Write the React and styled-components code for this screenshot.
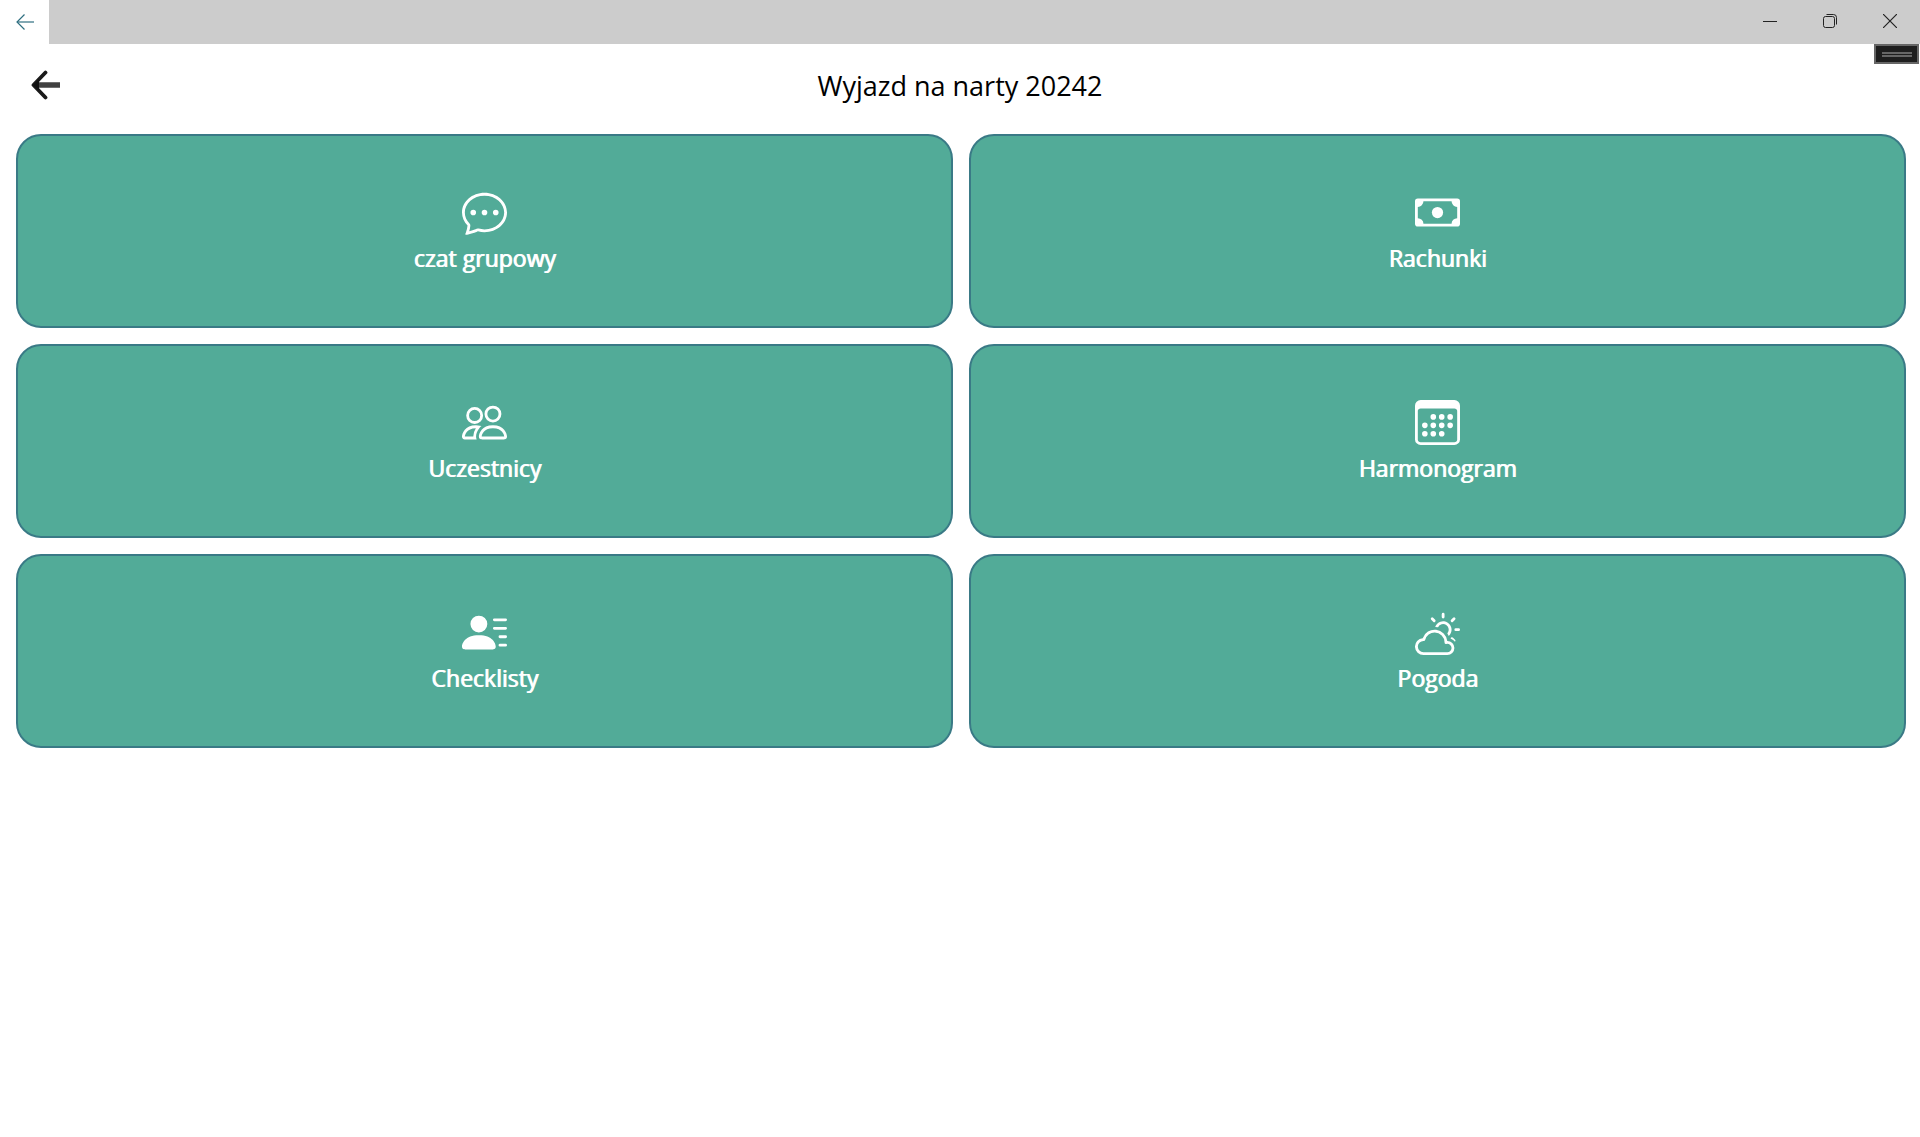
import React from "react";
import styled, { createGlobalStyle } from "styled-components";
import {
  BsChatDots,
  BsCash,
  BsPeople,
  BsCalendar3,
  BsPersonLinesFill,
  BsCloudSun,
} from "react-icons/bs";

const GlobalStyle = createGlobalStyle`
  *, *::before, *::after { box-sizing: border-box; }
  body {
    margin: 0;
    background: #fff;
    color: #000;
    font-family: "Open Sans", "Noto Sans", sans-serif;
  }
`;

const PlainButton = styled.button`
  display: flex;
  align-items: center;
  justify-content: center;
  margin: 0;
  padding: 0;
  border: 0;
  background: transparent;
  color: inherit;
  font: inherit;
  cursor: pointer;
`;

const TitleBar = styled.div`
  display: flex;
  justify-content: space-between;
  height: 44px;
  background: #ccc;
`;

const WindowBack = styled(PlainButton)`
  width: 49px;
  background: #fff;
  color: #2f6f80;
`;

const WindowControls = styled.div`
  display: flex;
`;

const WindowButton = styled(PlainButton)`
  width: 60px;
  padding-bottom: 2px;
  color: #222;
`;

const DebugHandle = styled(PlainButton)`
  position: absolute;
  top: 44px;
  right: 1px;
  width: 45px;
  height: 20px;
  border: 2px solid #666;
  background: #1e1e1e;
`;

const Grip = styled.span`
  width: 30px;
  height: 5px;
  border: solid #666;
  border-width: 2px 0;
`;

const Header = styled.header`
  display: grid;
  grid-template-columns: 90px 1fr 90px;
  align-items: center;
  height: 84px;
`;

const BackButton = styled(PlainButton)`
  width: 90px;
  height: 60px;
  padding-bottom: 2px;
`;

const Title = styled.h1`
  margin: 0;
  font-size: 27px;
  font-weight: 400;
  line-height: 38px;
  text-align: center;
`;

const Grid = styled.main`
  display: grid;
  grid-template-columns: 1fr 1fr;
  gap: 16px;
  padding: 6px 14px 16px 16px;
`;

const Tile = styled(PlainButton)`
  flex-direction: column;
  gap: 6px;
  height: 194px;
  padding-top: 2px;
  border: 2px solid #3a7a86;
  border-radius: 25px;
  background: #52ab98;
  color: #fff;

  svg {
    width: 45px;
    height: 45px;
  }
`;

const TileLabel = styled.span`
  font-size: 23px;
  font-weight: 400;
  line-height: 34px;
  text-shadow: 1px 0 0 #fff;
`;

const tiles = [
  { label: "czat grupowy", Icon: BsChatDots },
  { label: "Rachunki", Icon: BsCash },
  { label: "Uczestnicy", Icon: BsPeople },
  { label: "Harmonogram", Icon: BsCalendar3 },
  { label: "Checklisty", Icon: BsPersonLinesFill },
  { label: "Pogoda", Icon: BsCloudSun },
];

export default function App() {
  return (
    <>
      <GlobalStyle />
      <TitleBar>
        <WindowBack aria-label="Wstecz">
          <svg width="18" height="16" viewBox="0 0 18 16" fill="none" stroke="currentColor" strokeWidth="1.2">
            <path d="M8.5 0.5L1 8l7.5 7.5" />
            <path d="M1 8h17" />
          </svg>
        </WindowBack>
        <WindowControls>
          <WindowButton aria-label="Minimalizuj">
            <svg width="14" height="14" viewBox="0 0 14 14" fill="none" stroke="currentColor">
              <path d="M0 7.5h14" />
            </svg>
          </WindowButton>
          <WindowButton aria-label="Przywróć">
            <svg width="14" height="14" viewBox="0 0 14 14" fill="none" stroke="currentColor">
              <rect x="0.5" y="2.5" width="11" height="11" rx="2" />
              <path d="M3.5 0.5h7a3 3 0 0 1 3 3v7" />
            </svg>
          </WindowButton>
          <WindowButton aria-label="Zamknij">
            <svg width="14" height="14" viewBox="0 0 14 14" fill="none" stroke="currentColor" strokeWidth="1.2">
              <path d="M0 0l14 14M14 0L0 14" />
            </svg>
          </WindowButton>
        </WindowControls>
      </TitleBar>
      <DebugHandle aria-label="Narzędzia">
        <Grip />
      </DebugHandle>
      <Header>
        <BackButton aria-label="Powrót">
          <svg width="30" height="30" viewBox="0 0 30 30" fill="none" strokeLinecap="round" strokeLinejoin="round">
            <path d="M6 15h26" stroke="#404040" strokeWidth="5.6" />
            <path d="M15.5 2.5L3.5 15L15.5 27.5" stroke="#1a1a1a" strokeWidth="3.8" />
            <path d="M3 15l6-6v12z" fill="#111" />
          </svg>
        </BackButton>
        <Title>Wyjazd na narty 20242</Title>
      </Header>
      <Grid>
        {tiles.map(({ label, Icon }) => (
          <Tile key={label}>
            <Icon aria-hidden="true" />
            <TileLabel>{label}</TileLabel>
          </Tile>
        ))}
      </Grid>
    </>
  );
}
